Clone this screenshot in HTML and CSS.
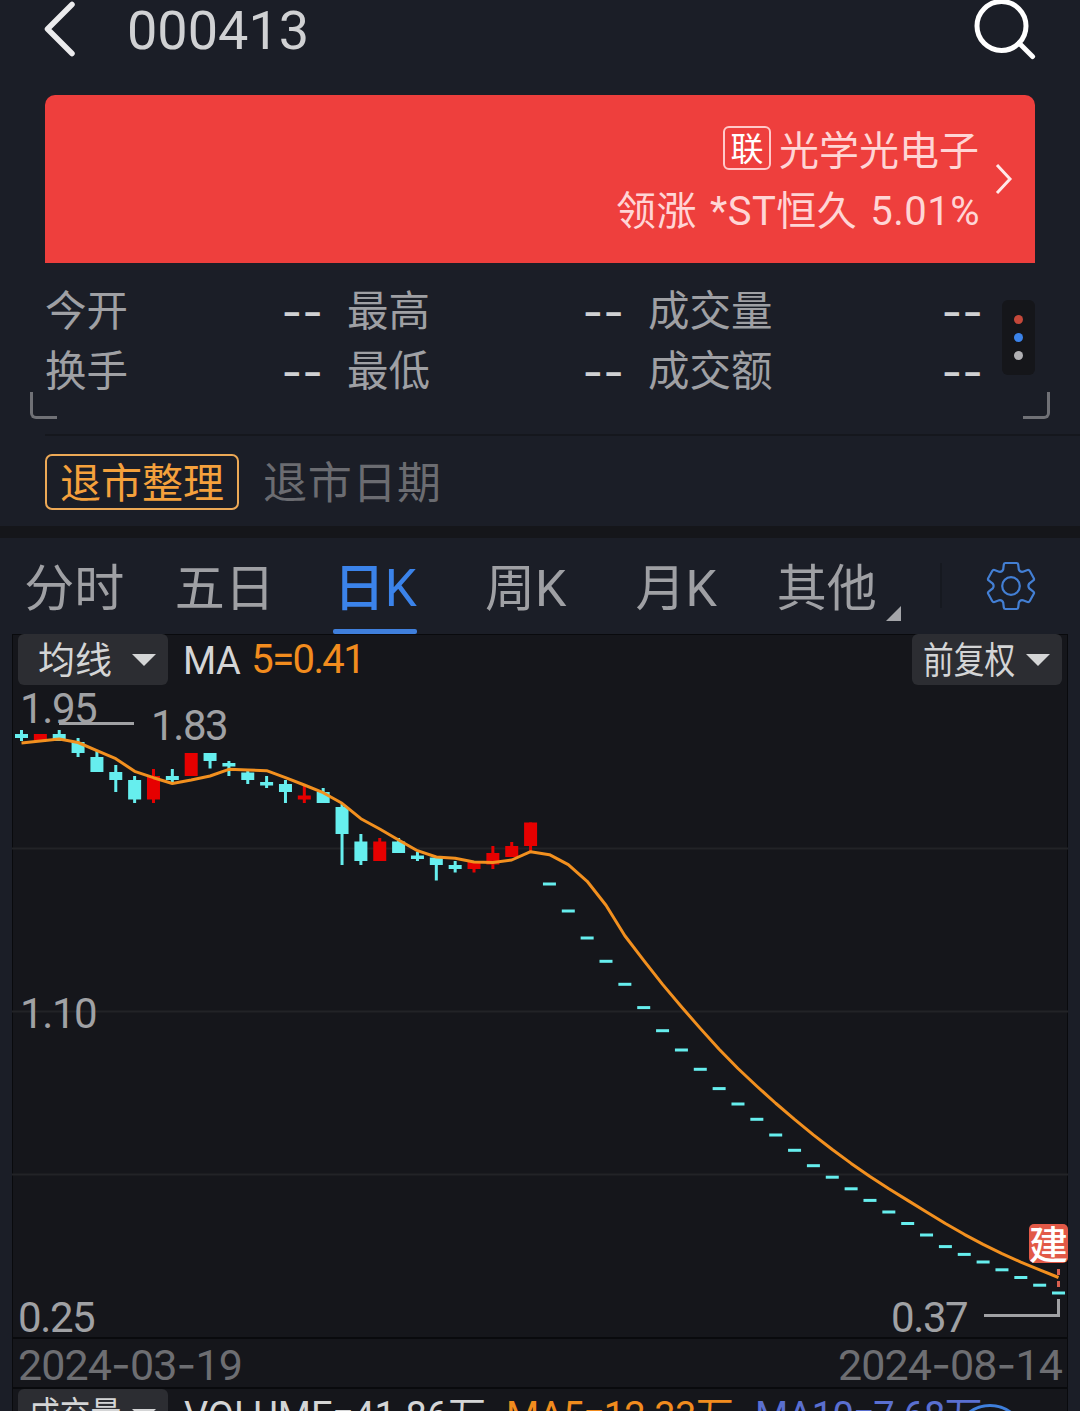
FILE: index.html
```html
<!doctype html>
<html lang="zh-CN">
<head>
    <meta charset="UTF-8">
    <meta name="viewport" content="width=device-width, initial-scale=1.0">
    <title>000413</title>
    <link rel="stylesheet" href="styles.css">
</head>
<body>
<div id="app">
    <div class="header">
        <svg class="back" width="36" height="60" viewBox="0 0 36 60"><path d="M31 4.500L6.500 29L31 53.500"/></svg>
        <h1>000413</h1>
        <svg class="search" width="64" height="62" viewBox="0 0 64 62"><circle cx="30.500" cy="26" r="24.500"/><path d="M48 43L61.500 56.500"/></svg>
    </div>

    <div class="banner">
        <div class="plate">
            <p><i>联</i><span class="plate-name">光学光电子</span></p>
            <p class="lead">领涨 *ST恒久 5.01%</p>
        </div>
        <svg class="arrow" width="20" height="34" viewBox="0 0 20 34"><path d="M3 3L16 17L3 31"/></svg>
    </div>

    <div class="quote">
        <ul>
            <li><span>今开</span><b>--</b></li>
            <li><span>最高</span><b>--</b></li>
            <li><span>成交量</span><b>--</b></li>
            <li><span>换手</span><b>--</b></li>
            <li><span>最低</span><b>--</b></li>
            <li><span>成交额</span><b>--</b></li>
        </ul>
        <div class="dots"><em class="red"></em><em class="blue"></em><em></em></div>
        <div class="corner corner-l"></div>
        <div class="corner corner-r"></div>
    </div>

    <div class="notice">
        <span class="tag">退市整理</span>
        <span class="date">退市日期</span>
    </div>

    <div class="tabs">
        <a>分时</a>
        <a>五日</a>
        <a class="active">日<s>K</s></a>
        <a>周K</a>
        <a>月K</a>
        <a class="more">其他</a>
        <div class="setting">
            <svg width="52" height="52" viewBox="-26 -26 52 52">
                <path d="M-5.500 -23H5.500Q7 -23 7.200 -21.500L7.800 -16.500Q9 -13.800 12 -14.300L16.500 -16Q18 -16.400 18.800 -15L22.800 -7.800Q23.500 -6.500 22.300 -5.500L18.300 -2.500Q16.500 0 18.300 2.500L22.300 5.500Q23.500 6.500 22.800 7.800L18.800 15Q18 16.400 16.500 16L12 14.300Q9 13.800 7.800 16.500L7.200 21.500Q7 23 5.500 23H-5.500Q-7 23 -7.200 21.500L-7.800 16.500Q-9 13.800 -12 14.300L-16.500 16Q-18 16.400 -18.800 15L-22.800 7.800Q-23.500 6.500 -22.300 5.500L-18.300 2.500Q-16.500 0 -18.300 -2.500L-22.300 -5.500Q-23.500 -6.500 -22.800 -7.800L-18.800 -15Q-18 -16.400 -16.500 -16L-12 -14.300Q-9 -13.800 -7.800 -16.500L-7.200 -21.500Q-7 -23 -5.500 -23Z"/>
                <circle r="8.800"/>
            </svg>
        </div>
    </div>

    <div class="panel">
        <div class="bar">
            <div class="select"><span>均线</span></div>
            <span class="ma">MA</span>
            <span class="ma5">5=0.41</span>
            <div class="select narrow right"><span>前复权</span></div>
        </div>
        <svg class="chart" width="1056" height="652" viewBox="12 685 1056 652">
            <path class="grid" d="M12 848.500H1068M12 1011.500H1068M12 1174.500H1068"/>
            <g class="label">
                <text x="20" y="723">1.95</text>
                <text x="151" y="740">1.83</text>
                <text x="20" y="1028">1.10</text>
                <text x="18" y="1332">0.25</text>
                <text x="891" y="1332">0.37</text>
            </g>
            <path class="guide" d="M59 723.500H134M984 1315.500H1058.500V1299"/>
            <g id="candles"></g>
            <path class="cost" d="M1058.500 1269V1275M1058.500 1281V1287"/>
            <polyline id="ma"/>
            <rect class="mark" x="1029" y="1224" width="39" height="39" rx="5"/>
            <text class="mark-text" x="1048.500" y="1259">建</text>
        </svg>
        <div class="dates">
            <span>2024<s>-</s>03<s>-</s>19</span>
            <span>2024<s>-</s>08<s>-</s>14</span>
        </div>
        <div class="bar volume">
            <div class="select narrow"><span>成交量</span></div>
            <span class="v1">VOLUME=41.86万</span>
            <span class="v2">MA5=12.33万</span>
            <span class="v3">MA10=7.68万</span>
            <div class="ball"></div>
        </div>
    </div>
</div>

<script>
    // 上影, 下影, 实体顶, 实体底, 1涨 0跌
    var data = [
        [730, 741, 734, 738, 0],
        [734, 741, 734, 741, 1],
        [730, 741, 734, 741, 0],
        [738, 757, 742, 753, 0],
        [750, 772, 757, 772, 0],
        [765, 792, 772, 780, 0],
        [776, 803, 780, 799.5, 0],
        [769, 803, 776, 799.5, 1],
        [769, 782, 776, 780, 0],
        [753, 776, 753, 776, 1],
        [753, 768.5, 753, 761, 0],
        [761, 776, 763, 766.5, 0],
        [770, 784, 772.5, 780, 0],
        [776, 788, 782, 785.5, 0],
        [780, 803, 784, 792, 0],
        [786, 803, 795.5, 799.5, 1],
        [788, 803, 792, 803, 0],
        [804, 865, 807, 834, 0],
        [834, 865, 841.5, 861, 0],
        [838, 861, 841.5, 861, 1],
        [838, 853, 841.5, 853, 0],
        [852, 861, 855.5, 859, 0],
        [857.5, 880.5, 857.5, 865, 0],
        [861, 872.5, 865, 869, 0],
        [861, 872.5, 862, 869, 1],
        [846, 869, 853, 864.5, 1],
        [842, 857, 846, 857, 1],
        [822.5, 851, 822.5, 846, 1]
    ];
    // 一字跌停
    var limit = [884, 911, 938, 961.3, 984.3, 1007.6, 1030.7, 1050, 1069.3, 1088.6, 1104, 1119.3, 1135, 1150.3,
        1165.7, 1177.2, 1188.8, 1200.4, 1212, 1223.5, 1235, 1246.6, 1254.4, 1262, 1269.8, 1277.5, 1285.2, 1293];
    var ma = [743, 741, 739, 742.5, 750.7, 758.7, 771.3, 777.7, 783.5, 780, 776, 769.3, 770, 770.7, 777.7, 785,
        792.7, 803.3, 818.7, 829, 840, 850.7, 857, 858.3, 862, 862.5, 860, 851.7, 854.7, 864.7, 881.3, 905.3];

    var html = '';
    var step = 18.855;
    for(var i=0;i<data.length;i++){
        var d = data[i];
        var x = 21.5 + i*step;
        var cls = d[4] ? 'up' : 'down';
        html += '<rect class="'+cls+'" x="'+(x-1.5)+'" y="'+d[0]+'" width="3" height="'+(d[1]-d[0])+'"/>';
        html += '<rect class="'+cls+'" x="'+(x-6.5)+'" y="'+d[2]+'" width="13" height="'+(d[3]-d[2])+'"/>';
    }
    for(var j=0;j<limit.length;j++){
        var lx = 21.5 + (data.length+j)*step;
        html += '<rect class="down" x="'+(lx-6.5)+'" y="'+(limit[j]-1.5)+'" width="13" height="3"/>';
        if(j >= 4){
            ma.push((limit[j]+limit[j-1]+limit[j-2]+limit[j-3]+limit[j-4])/5);
        }
    }
    document.getElementById('candles').innerHTML = html;

    var points = ma.map(function(y, i){
        return (21.5 + i*step)+','+y;
    });
    document.getElementById('ma').setAttribute('points', points.join(' '));
</script>
</body>
</html>
```

FILE: styles.css
```css
*{
    margin: 0;
    padding: 0;
    box-sizing: border-box;
}

body{
    background-color: #1b1e27;
    font-family: Roboto, "Noto Sans CJK SC", sans-serif;
    color: #9fa0a4;
}
i,b,em,s{
    font-style: normal;
    font-weight: 400;
    text-decoration: none;
}
ul{
    list-style: none;
}
svg{
    display: block;
    fill: none;
    overflow: visible;
}

#app{
    width: 1080px;
    height: 1411px;
    overflow: hidden;
}

.header{
    display: flex;
    height: 95px;
    padding: 0 44px 0 41px;
}
.back path{
    stroke: #ebebed;
    stroke-width: 5.5;
    stroke-linecap: round;
    stroke-linejoin: round;
}
.header h1{
    flex: 1;
    margin-left: 50px;
    font-size: 54px;
    line-height: 61px;
    font-weight: 400;
    color: #d0d1d3;
}
.search{
    margin-right: 1px;
    stroke: #fff;
    stroke-width: 5;
    stroke-linecap: round;
}

.banner{
    display: flex;
    justify-content: flex-end;
    height: 168px;
    margin: 0 45px;
    padding: 22px 21px 0 0;
    border-radius: 10px 10px 0 0;
    background-color: #ee3f3d;
}
.plate{
    font-size: 40px;
    color: #ffd5d5;
    text-align: right;
}
.plate p{
    display: flex;
    align-items: center;
    justify-content: flex-end;
    height: 62px;
    line-height: 62px;
    white-space: pre;
}
.plate i{
    width: 48px;
    height: 44px;
    margin-right: 8px;
    border: 2px solid #ffc9c9;
    border-radius: 6px;
    font-size: 33px;
    line-height: 43px;
    text-align: center;
    color: #fff;
}
.plate-name{
    padding: 7px 1px 0 0;
}
.plate .lead{
    padding-top: 4px;
    letter-spacing: 0.5px;
    word-spacing: 2.5px;
}
.arrow{
    margin: 45px 0 0 14px;
    stroke: #ffe9e9;
    stroke-width: 3;
}

.quote{
    position: relative;
    display: flex;
    height: 171px;
    padding: 19px 45px 0;
}
.quote ul{
    display: grid;
    grid-template-columns: 277px 276px 334px;
    grid-auto-rows: 60px;
    column-gap: 25px;
}
.quote li{
    display: flex;
    justify-content: space-between;
    font-size: 41.5px;
    line-height: 60px;
}
.quote b{
    margin-right: -1px;
    font-family: Inter, sans-serif;
    font-size: 45px;
    line-height: 60px;
    color: #d0d1d3;
}
.dots{
    display: flex;
    flex-direction: column;
    align-items: center;
    justify-content: center;
    gap: 9px;
    width: 33px;
    height: 75px;
    margin: 18px 0 0 20px;
    border-radius: 6px;
    background-color: #15161a;
}
.dots em{
    width: 9px;
    height: 9px;
    border-radius: 50%;
    background-color: #b0b0b3;
}
.dots .red{
    background-color: #c4483a;
}
.dots .blue{
    background-color: #3b83ea;
}
.corner{
    position: absolute;
    top: 129px;
    width: 27px;
    height: 27px;
    border-bottom: 3px solid #707176;
}
.corner-l{
    left: 30px;
    border-left: 3px solid #707176;
    border-bottom-left-radius: 6px;
}
.corner-r{
    right: 30px;
    border-right: 3px solid #707176;
    border-bottom-right-radius: 6px;
}

.notice{
    display: flex;
    height: 92px;
    margin-left: 45px;
    padding-top: 18px;
    border-top: 2px solid #15171d;
}
.tag{
    width: 194px;
    height: 56px;
    border: 2px solid #eda956;
    border-radius: 7px;
    font-size: 41px;
    line-height: 57px;
    text-align: center;
    color: #f5a13c;
}
.date{
    margin-left: 24px;
    font-size: 44px;
    line-height: 60px;
    letter-spacing: 0.7px;
    color: #6b6c71;
}

.tabs{
    display: flex;
    height: 108px;
    border-top: 12px solid #15161a;
}
.tabs a{
    position: relative;
    width: 150.5px;
    padding-right: 2px;
    font-size: 50px;
    line-height: 102px;
    text-align: center;
}
.tabs .active{
    font-size: 51px;
    font-weight: 500;
    color: #3b83ea;
}
.tabs .active::after{
    content: "";
    position: absolute;
    left: 32px;
    bottom: 0;
    width: 84px;
    height: 5px;
    border-radius: 2px;
    background-color: #3f7fdc;
}
.tabs .more::after{
    content: "";
    position: absolute;
    right: 2px;
    bottom: 13px;
    border-left: 15px solid transparent;
    border-bottom: 15px solid #a4a5a9;
}
.setting{
    height: 45px;
    margin: 25px 0 0 37px;
    padding-left: 43px;
    border-left: 2px solid #161920;
}
.setting svg{
    margin-top: -3px;
    stroke: #437fd4;
    stroke-width: 2.2;
}

.panel{
    width: 1056px;
    height: 777px;
    margin-left: 12px;
    background-color: #15161b;
    box-shadow: inset 1px 1px 0 #090a0d, inset -1px 0 0 #090a0d;
}
.bar{
    display: flex;
    height: 51px;
    padding: 0 6px;
    line-height: 51px;
    font-size: 38px;
    color: #d4d5d6;
    white-space: nowrap;
}
.select{
    display: flex;
    align-items: center;
    width: 150px;
    height: 51px;
    padding-left: 20px;
    border-radius: 6px;
    background-color: #2c2d32;
    font-size: 37px;
}
.select span{
    padding-top: 4px;
}
.select::after{
    content: "";
    margin-left: 20px;
    border: 12px solid transparent;
    border-top-color: #d4d5d6;
    border-bottom: 0;
}
.narrow{
    padding-left: 11px;
}
.narrow span{
    width: 92px;
    transform: scaleX(0.83);
    transform-origin: left;
}
.narrow::after{
    margin-left: 11px;
}
.right{
    margin-left: auto;
}
.ma{
    margin-left: 15px;
    line-height: 54px;
    letter-spacing: -0.5px;
}
.ma5{
    margin-left: 11px;
    font-size: 40px;
    line-height: 51px;
    letter-spacing: -1.6px;
    color: #f28c1e;
}

.grid{
    stroke: #222327;
    stroke-width: 2;
}
.label{
    fill: #a0a1a4;
    font-size: 42px;
    letter-spacing: -1.4px;
}
.guide{
    stroke: #a0a1a4;
    stroke-width: 3;
}
.up{
    fill: #e60000;
}
.down{
    fill: #66eeee;
}
#ma{
    stroke: #f2901f;
    stroke-width: 3;
    stroke-linejoin: round;
}
.cost{
    stroke: #d9604f;
    stroke-width: 3;
}
.mark{
    fill: #e25947;
}
.mark-text{
    fill: #fff;
    font-size: 39px;
    font-weight: 500;
    text-anchor: middle;
}

.dates{
    display: flex;
    justify-content: space-between;
    height: 52px;
    padding: 0 6px;
    border-top: 2px solid #090a0d;
    border-bottom: 2px solid #090a0d;
    font-size: 43px;
    line-height: 51px;
    letter-spacing: -0.9px;
    color: #6d6e72;
}
.dates s{
    font-family: Inter, sans-serif;
}
.volume{
    position: relative;
    height: 22px;
    overflow: hidden;
    line-height: 54px;
}
.v1{
    margin-left: 16px;
    letter-spacing: -0.1px;
}
.v2{
    margin-left: 20px;
    letter-spacing: -0.7px;
    color: #f28c1e;
}
.v3{
    margin-left: 22px;
    letter-spacing: -0.7px;
    color: #5a6fd0;
}
.ball{
    position: absolute;
    left: 942px;
    top: 15px;
    width: 72px;
    height: 72px;
    border: 3px solid #3f7fdc;
    border-radius: 50%;
    background-color: #15161b;
}
```
